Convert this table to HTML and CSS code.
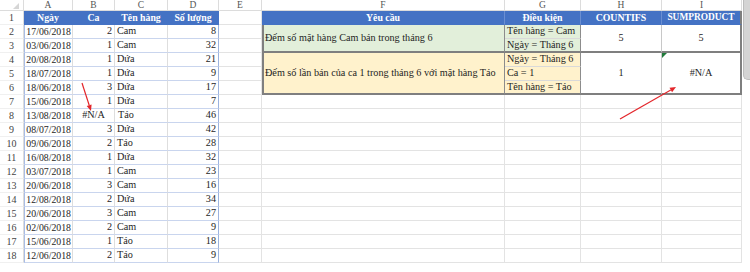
FILE: index.html
```html
<!DOCTYPE html>
<html lang="vi">
<head>
<meta charset="utf-8">
<title>Sheet</title>
<link rel="stylesheet" href="styles.css">
</head>
<body>
<div class="sheet">
  <div class="c corner"></div><div class="c hd">A</div><div class="c hd">B</div><div class="c hd">C</div><div class="c hd">D</div><div class="c hd">E</div><div class="c hd">F</div><div class="c hd">G</div><div class="c hd">H</div><div class="c hd">I</div><div class="c hd x"></div>

  <div class="c rn">1</div><div class="c th">Ngày</div><div class="c th">Ca</div><div class="c th">Tên hàng</div><div class="c th">Số lượng</div><div class="c"></div><div class="c th th2">Yêu cầu</div><div class="c th th2">Điều kiện</div><div class="c th th2">COUNTIFS</div><div class="c th th2 last">SUMPRODUCT</div><div class="c x"></div>

  <div class="c rn">2</div><div class="c ta r">17/06/2018</div><div class="c tb r">2</div><div class="c tc">Cam</div><div class="c td r">8</div><div class="c"></div><div class="c req green span2">Đếm số mặt hàng Cam bán trong tháng 6</div><div class="c cond green">Tên hàng = Cam</div><div class="c res span2 endrow">5</div><div class="c res rlast span2 endrow">5</div><div class="c x"></div>

  <div class="c rn">3</div><div class="c ta r">03/06/2018</div><div class="c tb r">1</div><div class="c tc">Cam</div><div class="c td r">32</div><div class="c"></div><div class="c cond green endrow">Ngày = Tháng 6</div><div class="c x"></div>

  <div class="c rn">4</div><div class="c ta r">20/08/2018</div><div class="c tb r">1</div><div class="c tc">Dứa</div><div class="c td r">21</div><div class="c"></div><div class="c req yellow span3">Đếm số lần bán của ca 1 trong tháng 6 với mặt hàng Táo</div><div class="c cond yellow">Ngày = Tháng 6</div><div class="c res span3 endrow">1</div><div class="c res rlast span3 endrow err">#N/A</div><div class="c x"></div>

  <div class="c rn">5</div><div class="c ta r">18/07/2018</div><div class="c tb r">1</div><div class="c tc">Dứa</div><div class="c td r">9</div><div class="c"></div><div class="c cond yellow">Ca = 1</div><div class="c x"></div>

  <div class="c rn">6</div><div class="c ta r">18/06/2018</div><div class="c tb r">3</div><div class="c tc">Dứa</div><div class="c td r">17</div><div class="c"></div><div class="c cond yellow endrow">Tên hàng = Táo</div><div class="c x"></div>

  <div class="c rn">7</div><div class="c ta r">15/06/2018</div><div class="c tb r">1</div><div class="c tc">Dứa</div><div class="c td r">7</div><div class="c"></div><div class="c"></div><div class="c"></div><div class="c"></div><div class="c"></div><div class="c x"></div>

  <div class="c rn">8</div><div class="c ta r">13/08/2018</div><div class="c tb ctr">#N/A</div><div class="c tc ind">Táo</div><div class="c td r">46</div><div class="c"></div><div class="c"></div><div class="c"></div><div class="c"></div><div class="c"></div><div class="c x"></div>

  <div class="c rn">9</div><div class="c ta r">08/07/2018</div><div class="c tb r">3</div><div class="c tc">Dứa</div><div class="c td r">42</div><div class="c"></div><div class="c"></div><div class="c"></div><div class="c"></div><div class="c"></div><div class="c x"></div>

  <div class="c rn">10</div><div class="c ta r">09/06/2018</div><div class="c tb r">2</div><div class="c tc">Táo</div><div class="c td r">28</div><div class="c"></div><div class="c"></div><div class="c"></div><div class="c"></div><div class="c"></div><div class="c x"></div>

  <div class="c rn">11</div><div class="c ta r">16/08/2018</div><div class="c tb r">1</div><div class="c tc">Dứa</div><div class="c td r">32</div><div class="c"></div><div class="c"></div><div class="c"></div><div class="c"></div><div class="c"></div><div class="c x"></div>

  <div class="c rn">12</div><div class="c ta r">03/07/2018</div><div class="c tb r">1</div><div class="c tc">Cam</div><div class="c td r">23</div><div class="c"></div><div class="c"></div><div class="c"></div><div class="c"></div><div class="c"></div><div class="c x"></div>

  <div class="c rn">13</div><div class="c ta r">20/06/2018</div><div class="c tb r">3</div><div class="c tc">Cam</div><div class="c td r">16</div><div class="c"></div><div class="c"></div><div class="c"></div><div class="c"></div><div class="c"></div><div class="c x"></div>

  <div class="c rn">14</div><div class="c ta r">12/08/2018</div><div class="c tb r">2</div><div class="c tc">Dứa</div><div class="c td r">34</div><div class="c"></div><div class="c"></div><div class="c"></div><div class="c"></div><div class="c"></div><div class="c x"></div>

  <div class="c rn">15</div><div class="c ta r">20/06/2018</div><div class="c tb r">3</div><div class="c tc">Cam</div><div class="c td r">27</div><div class="c"></div><div class="c"></div><div class="c"></div><div class="c"></div><div class="c"></div><div class="c x"></div>

  <div class="c rn">16</div><div class="c ta r">02/06/2018</div><div class="c tb r">2</div><div class="c tc">Cam</div><div class="c td r">9</div><div class="c"></div><div class="c"></div><div class="c"></div><div class="c"></div><div class="c"></div><div class="c x"></div>

  <div class="c rn">17</div><div class="c ta r">15/06/2018</div><div class="c tb r">1</div><div class="c tc">Táo</div><div class="c td r">18</div><div class="c"></div><div class="c"></div><div class="c"></div><div class="c"></div><div class="c"></div><div class="c x"></div>

  <div class="c rn">18</div><div class="c ta r">12/06/2018</div><div class="c tb r">2</div><div class="c tc">Táo</div><div class="c td r">9</div><div class="c"></div><div class="c"></div><div class="c"></div><div class="c"></div><div class="c"></div><div class="c x"></div>

  <div class="scroll"></div>
  <svg class="arrows" width="750" height="272" viewBox="0 0 750 272">
    <line x1="82" y1="83" x2="89.2" y2="105.3" stroke="#e3262b" stroke-width="1.2"/>
    <polygon points="91,111 86.7,106.1 91.6,104.5" fill="#e3262b"/>
    <line x1="620" y1="119" x2="670.8" y2="90" stroke="#e3262b" stroke-width="1.2"/>
    <polygon points="676,87 672.1,92.2 669.5,87.7" fill="#e3262b"/>
  </svg>
</div>
</body>
</html>
```

FILE: styles.css
```css
* { box-sizing: border-box; }

body {
  margin: 0;
  background: #ffffff;
  font-family: "Liberation Serif", "Times New Roman", serif;
  font-size: 10.2px;
  color: #1e1e1e;
}

.sheet {
  position: relative;
  width: 750px;
  height: 272px;
  overflow: hidden;
  display: grid;
  grid-template-columns: 24px 49px 42px 53px 51px 43px 243px 76px 81px 80px 1fr;
  grid-template-rows: 11px repeat(18, 14px);
  align-content: start;
}

.c {
  border-right: 1px solid #e3e3e3;
  border-bottom: 1px solid #e3e3e3;
  display: flex;
  align-items: center;
  padding: 0 2px;
  white-space: nowrap;
  overflow: hidden;
  line-height: 1;
}

.corner { position: relative; border-color: #dcdcdc; }
.corner::after {
  content: "";
  position: absolute;
  right: 4px;
  bottom: 1px;
  border-left: 6px solid transparent;
  border-bottom: 6px solid #d6d6d6;
}

.hd {
  justify-content: center;
  color: #555555;
  font-size: 9.5px;
  border-color: #dcdcdc;
  padding-top: 1px;
}

.rn {
  justify-content: center;
  color: #444444;
  font-size: 10px;
  border-right-color: #dcdcdc;
  border-bottom-color: #f0f0f0;
}

.x { border-right: none; border-bottom-color: #ffffff; }

.th {
  background: #4472c4;
  color: #ffffff;
  font-weight: bold;
  font-size: 9.8px;
  justify-content: center;
  border-right-color: #4472c4;
  border-bottom-color: #4472c4;
}
.th2 { border-right-color: #6b8fd2; }
.th2.last { border-right: 2px solid #7f7f7f; font-size: 9.4px; }

.ta, .tb, .tc, .td {
  border-bottom-color: #c9d5ee;
  border-right-color: #dedede;
}
.ta { border-left: 1px solid #a9bde6; font-size: 9.8px; padding-right: 1px; }
.td { border-right-color: #9bb3df; }

.r { justify-content: flex-end; }
.ctr { justify-content: center; }
.ind { padding-left: 3px; }

.green { background: #e2efda; }
.yellow { background: #fff2cc; }

.req {
  border-left: 2px solid #7f7f7f;
  border-right: 1px solid #8c8c8c;
  border-bottom: 2px solid #7f7f7f;
  padding-left: 1px;
}

.cond {
  border-right: 1px solid #8c8c8c;
  border-bottom-color: #d9d9d9;
}
.cond.endrow { border-bottom: 2px solid #7f7f7f; }

.res {
  justify-content: center;
  border-right-color: #c8c8c8;
  background: #ffffff;
}
.res.endrow { border-bottom: 2px solid #7f7f7f; }
.res.rlast { border-right: 2px solid #7f7f7f; }

.span2 { grid-row: span 2; }
.span3 { grid-row: span 3; }

.err { position: relative; }
.err::before {
  content: "";
  position: absolute;
  left: 0;
  top: 0;
  border-top: 5px solid #1f7a3a;
  border-right: 5px solid transparent;
}

.scroll {
  position: absolute;
  left: 743px;
  top: 0;
  width: 10px;
  height: 80px;
  background: #d4d4d4;
  border-left: 1px solid #bcbcbc;
  border-bottom: 1px solid #bcbcbc;
  border-bottom-left-radius: 5px;
}

.arrows {
  position: absolute;
  left: 0;
  top: 0;
  pointer-events: none;
}
```
